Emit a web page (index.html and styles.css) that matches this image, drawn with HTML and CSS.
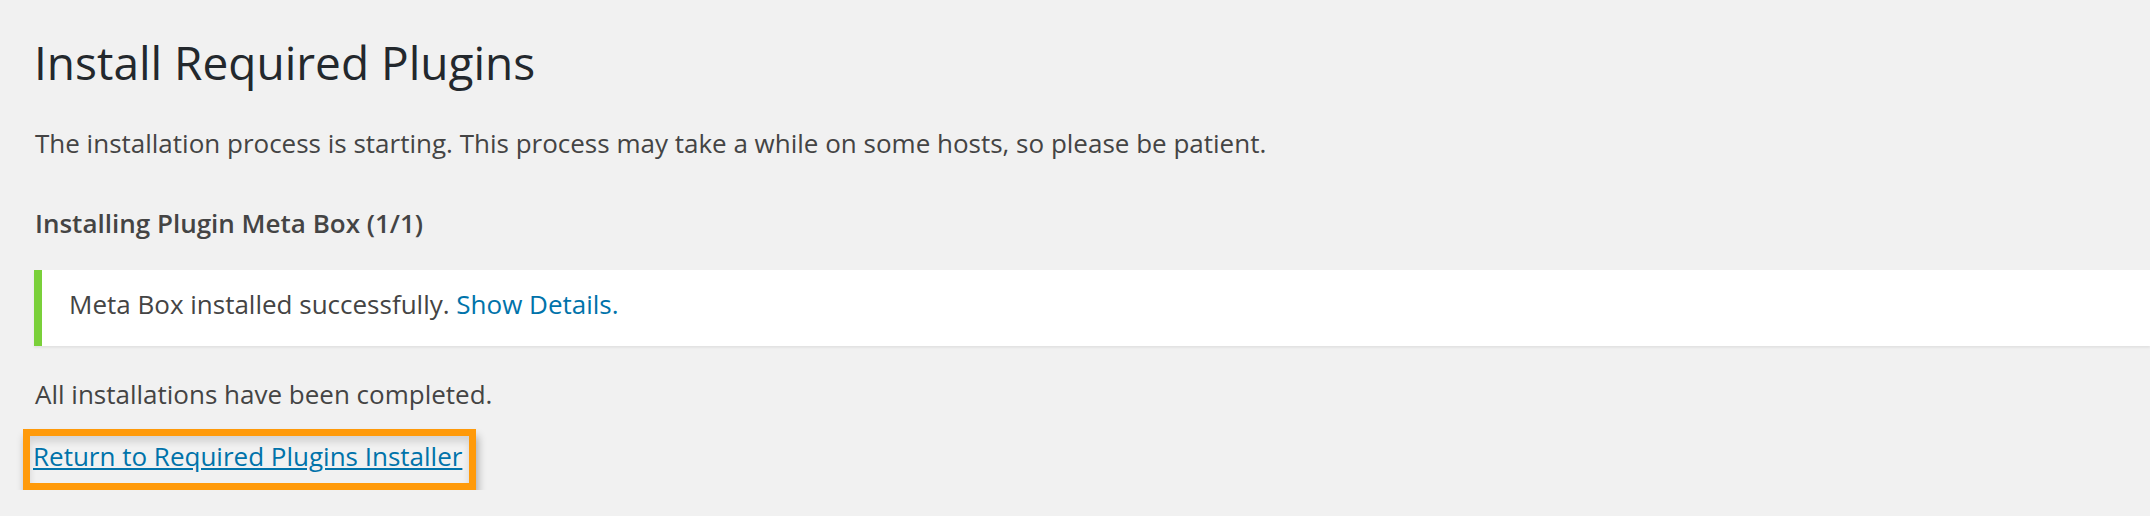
FILE: index.html
```html
<!DOCTYPE html>
<html lang="en">
<head>
<meta charset="utf-8">
<title>Install Required Plugins</title>
<link rel="stylesheet" href="styles.css">
</head>
<body>
<div class="wrap">
  <h1 class="title">Install Required Plugins</h1>
  <p class="intro">The installation process is starting. This process may take a while on some hosts, so please be patient.</p>
  <h2 class="step">Installing Plugin Meta Box (1/1)</h2>
  <div class="notice">
    <p>Meta Box installed successfully. <a href="#" class="details">Show Details.</a></p>
  </div>
  <p class="done">All installations have been completed.</p>
  <p class="return"><span class="highlight"><a href="#" class="return-link">Return to Required Plugins Installer</a></span></p>
</div>
</body>
</html>
```

FILE: styles.css
```css
html, body {
  margin: 0;
  padding: 0;
  background: #f1f1f1;
}
body {
  font-family: "Open Sans", "Liberation Sans", sans-serif;
  color: #444;
  font-size: 26px;
  line-height: 1.5;
  overflow: hidden;
}
.wrap {
  padding: 33px 0 0 34px;
}
.title {
  margin: 0;
  font-size: 46px;
  font-weight: 400;
  line-height: 1.3;
  color: #23282d;
}
.intro {
  margin: 31px 0 0 1px;
}
.step {
  margin: 41px 0 0 1px;
  font-size: 26px;
  font-weight: 600;
  line-height: 1.5;
}
.notice {
  margin: 27px 0 0 0;
  background: #fff;
  border-left: 8px solid #7ad03a;
  box-shadow: 0 2px 2px rgba(0,0,0,0.06);
  padding: 15px 27px 22px;
}
.notice p {
  margin: 0;
}
.details {
  color: #0073aa;
  text-decoration: none;
}
.done {
  margin: 29px 0 0 1px;
}
.return {
  margin: 15px 0 0 0;
}
.highlight {
  display: inline-block;
  margin-left: -11px;
  padding: 1px 7px 7px 3px;
  border: 7px solid #ff9a0a;
  box-shadow: 2px 7px 8px rgba(0,0,0,0.3), inset 0 6px 7px rgba(0,0,0,0.12);
}
.return-link {
  color: #0073aa;
  text-decoration: underline;
}
```
